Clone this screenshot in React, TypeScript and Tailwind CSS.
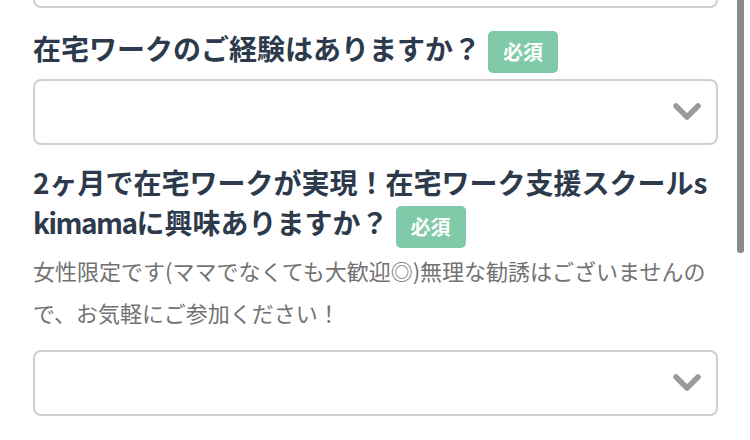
import React from "react";

const Chevron = () => (
  <svg width="28" height="20" viewBox="0 0 28 20" className="absolute right-[15px] top-1/2 -translate-y-1/2">
    <path d="M3 4 L14 15 L25 4" fill="none" stroke="#9a9a9a" strokeWidth="5.5" strokeLinecap="round" strokeLinejoin="round" />
  </svg>
);

const Select = ({ className = "" }: { className?: string }) => (
  <div className={"relative h-[66px] rounded-[8px] border-2 border-[#cfcfcf] bg-white " + className}>
    <Chevron />
  </div>
);

const Badge = () => (
  <span className="ml-[7px] inline-block h-[42px] rounded-[5px] bg-[#80c9a9] px-[15px] align-middle text-[20px] font-bold leading-[42px] text-white">
    必須
  </span>
);

export default function App() {
  return (
    <div
      className="relative h-[440px] w-[750px] overflow-hidden bg-white"
      style={{ fontFamily: '"Noto Sans CJK JP", "Noto Sans", sans-serif' }}
    >
      <div className="absolute right-[6px] top-0 h-[253px] w-[7px] rounded-b-[3px] bg-[#8a8a8a]" />
      <div className="px-[33px] pr-[32px]">
        <div className="-mt-[58px] h-[66px] rounded-[8px] border-2 border-[#cfcfcf]" />
        <div className="mt-[20px] whitespace-nowrap text-[28px] font-bold leading-[40px] text-[#2d3a4b]">
          在宅ワークのご経験はありますか？
          <Badge />
        </div>
        <Select className="mt-[6px]" />
        <div className="mt-[17px] whitespace-nowrap text-[28px] font-bold leading-[40px] text-[#2d3a4b]">
          2ヶ月で在宅ワークが実現！在宅ワーク支援スクールs
          <br />
          <span className="tracking-[-1.5px]">kimama</span>に興味ありますか？
          <Badge />
        </div>
        <div className="mt-[1px] whitespace-nowrap text-[22px] leading-[42px] text-[#727272]">
          女性限定です(ママでなくても大歓迎◎)無理な勧誘はございませんの
          <br />
          で、お気軽にご参加ください！
        </div>
        <Select className="mt-[17px]" />
      </div>
    </div>
  );
}
